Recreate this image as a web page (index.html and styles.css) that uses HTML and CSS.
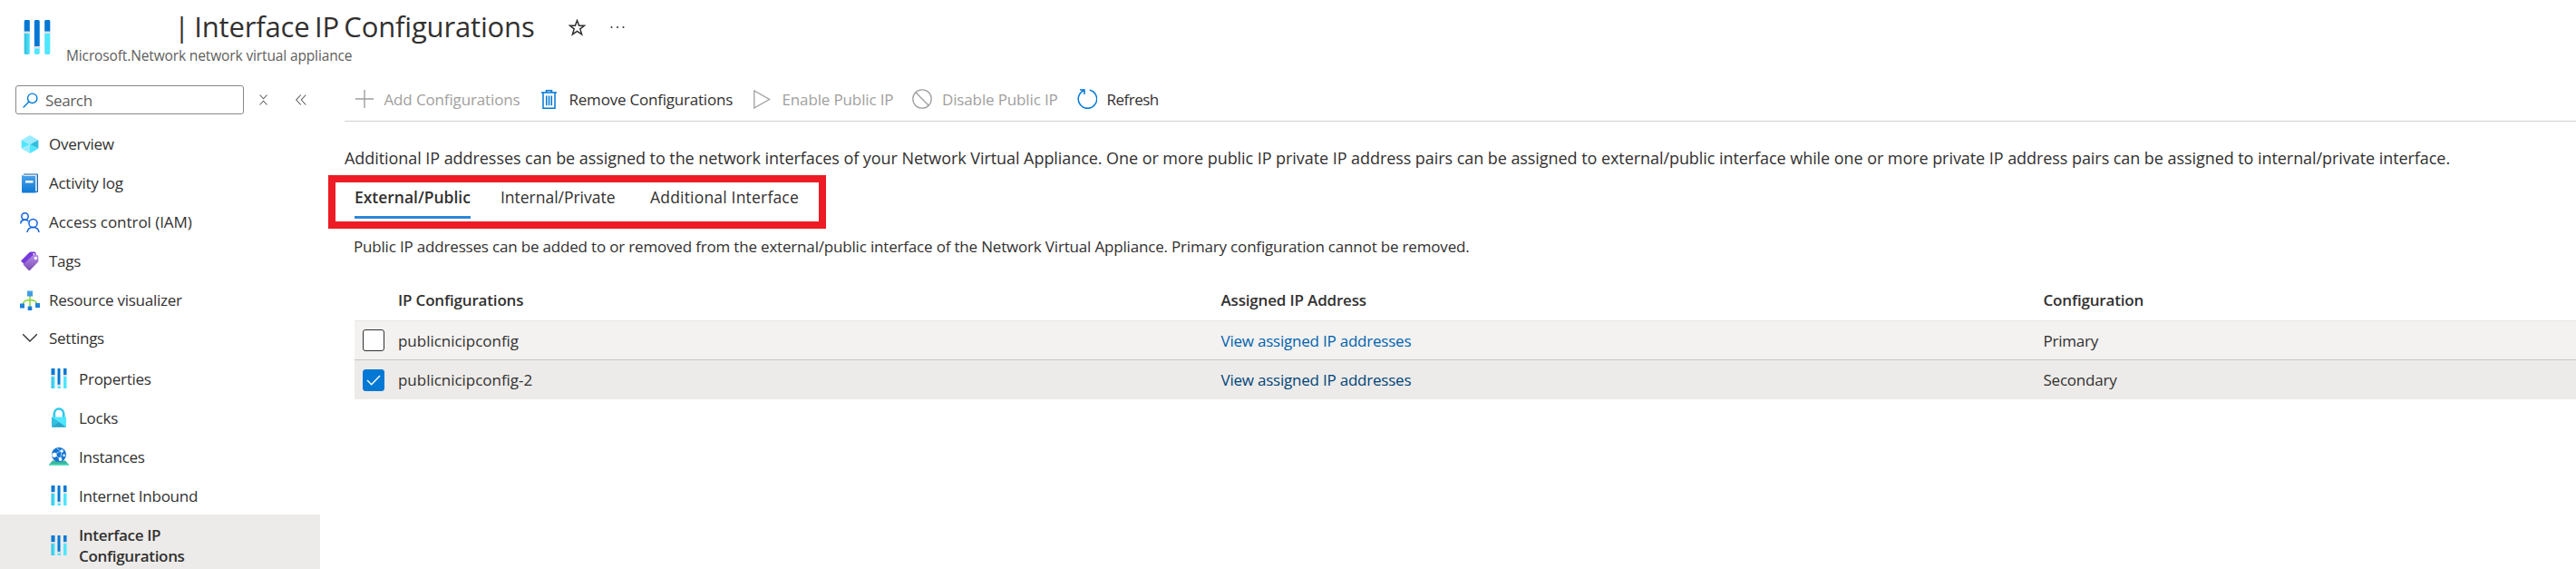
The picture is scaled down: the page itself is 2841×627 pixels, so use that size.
FILE: index.html
```html
<!DOCTYPE html>
<html lang="en">
<head>
<meta charset="utf-8">
<title>Interface IP Configurations</title>
<link rel="stylesheet" href="styles.css">
</head>
<body>
<svg class="defs" width="0" height="0" aria-hidden="true">
  <defs>
    <linearGradient id="cyan" x1="0" y1="0" x2="1" y2="0"><stop offset="0" stop-color="#32bedd"/><stop offset="1" stop-color="#50e6ff"/></linearGradient>
    <linearGradient id="blue" x1="0" y1="0" x2="0" y2="1"><stop offset="0" stop-color="#4ba3ea"/><stop offset="1" stop-color="#0f78d4"/></linearGradient>
    <linearGradient id="violet" x1="0" y1="0" x2="0" y2="1"><stop offset="0" stop-color="#b78be6"/><stop offset="1" stop-color="#7a4fb5"/></linearGradient>
    <symbol id="nva" viewBox="0 0 22 39" preserveAspectRatio="none">
      <path fill="#0078d4" d="M.5 1.500Q.5 0 2 0h2q1 0 1 1.500V13H.5zM8.700 1.500Q8.700 0 10 0h1.500q1.500 0 1.500 1.500V30H8.700zM17 1.500Q17 0 18.300 0h2q1.200 0 1.200 1.500V13H17z"/>
      <path fill="url(#cyan)" d="M.5 15H5v22.500Q5 39 3.800 39H1.700Q.5 39 .5 37.500z"/>
      <path fill="#50e6ff" d="M17 15h4.500v22.500q0 1.500-1.200 1.500h-2Q17 39 17 37.500zM8.700 32H13v5.500q0 1.500-1.300 1.500H10q-1.300 0-1.300-1.500z"/>
      <path fill="#e0e0e0" d="M0 13h5.600v2H0zM8 30h5.600v2H8zM16.400 13H22v2h-5.600z"/>
    </symbol>
    <symbol id="nva-small" viewBox="0 0 17 22">
      <path fill="#0078d4" d="M0 0h4v7H0zM7 0h3v18H7zM13.500 0H17v7h-3.500z"/>
      <path fill="url(#cyan)" d="M0 9h4v13H0z"/>
      <path fill="#50e6ff" d="M13.500 9H17v13h-3.500zM7 19.500h3.500V22H7z"/>
      <path fill="#dadada" d="M0 7h4v1.700H0zM6.500 17.700h4.200v1.500H6.500zM13.500 7H17v1.700h-3.500z"/>
    </symbol>
  </defs>
</svg>

<header class="header">
  <svg class="header-icon"><use href="#nva"/></svg>
  <div class="header-text">
    <div class="title-row">
      <h1 class="title">| Interface IP Configurations</h1>
      <svg class="star" viewBox="0 0 19 19" fill="none" stroke="#323130" stroke-width="1.500"><path d="M9.500 1.500l2.100 5.700h6l-4.800 3.700 1.800 6-5.100-3.600-5.100 3.600 1.800-6-4.800-3.700h6z"/></svg>
      <svg class="more" viewBox="0 0 16 4" fill="#323130"><circle cx="1.500" cy="2" r="1"/><circle cx="8" cy="2" r="1"/><circle cx="14.500" cy="2" r="1"/></svg>
    </div>
    <div class="subtitle">Microsoft.Network network virtual appliance</div>
  </div>
</header>

<div class="body">
  <aside class="sidebar">
    <div class="search-row">
      <div class="search">
        <svg width="17" height="17" viewBox="0 0 17 17" fill="none" stroke="#0078d4" stroke-width="1.400"><circle cx="10.700" cy="6.300" r="5.200"/><path d="M7 10L.6 16.400"/></svg>
        <span>Search</span>
      </div>
      <svg class="expand" width="9" height="12" viewBox="0 0 9 12" fill="none" stroke="#605e5c" stroke-width="1.100"><path d="M.5.5l4 4.300 4-4.300M.5 11.500l4-4.300 4 4.300"/></svg>
      <svg class="collapse" width="12" height="12" viewBox="0 0 12 12" fill="none" stroke="#605e5c" stroke-width="1.100"><path d="M5.800.5L.8 6l5 5.500M11.300.5l-5 5.500 5 5.500"/></svg>
    </div>
    <nav class="menu">
      <div class="item">
        <svg class="icon" viewBox="0 0 22 22"><path fill="#9cebff" d="M11 1l9.300 5.200L11 11.200 1.700 6.200z"/><path fill="#50e6ff" d="M1.700 6.200l9.300 5-9.300 4.600z"/><path fill="#9cebff" d="M11 11.200V21l-9.300-5.200z"/><path fill="#32bedd" d="M20.300 6.200v9.600L11 11.200z"/><path fill="#50e6ff" d="M11 11.200l9.300 4.600L11 21z"/></svg>
        <span>Overview</span>
      </div>
      <div class="item">
        <svg class="icon" viewBox="0 0 22 22"><path fill="#0f6cbd" d="M4 .5h15q1 0 1 1V20q0 1-1 1H4z"/><path fill="#e6e6e6" d="M4 1.500h14.800v18.300H4z"/><path fill="url(#blue)" d="M2 2.600q0-.6.600-.6L5 3h12v18.500H2.800q-.8 0-.8-.8z"/><path fill="#fff" d="M6 8h8.500v2.500H6z"/></svg>
        <span>Activity log</span>
      </div>
      <div class="item wide">
        <svg class="icon" viewBox="0 0 22 22" fill="none" stroke="#0f62d9" stroke-width="1.500"><circle cx="5.500" cy="4.500" r="3.700"/><path d="M.8 12.500q0-4.300 4.700-4.300 2.500 0 3.800 1.800"/><circle cx="14.500" cy="12" r="4.600"/><path d="M8 22q.7-5.400 6.500-5.400T21 22"/></svg>
        <span>Access control (IAM)</span>
      </div>
      <div class="item">
        <svg class="icon" viewBox="0 0 22 22"><path fill="#773adc" d="M1 10.500L10.500 1q.6-.5 1.500-.5h4q1.500 0 1.600 1.500v4.500L6.500 16z"/><path fill="url(#violet)" d="M3.500 14.500L14 4.500q.7-.5 1.500-.5h3.500q1.400 0 1.300 1.500v5q0 .8-.6 1.400L11.200 20.700q-.9.800-1.800 0z"/><circle cx="17.300" cy="7.500" r="1.700" fill="#fff"/><circle cx="15.400" cy="3" r="1" fill="#fff"/></svg>
        <span>Tags</span>
      </div>
      <div class="item">
        <svg class="icon" viewBox="0 0 22 22"><path fill="none" stroke="#86d633" stroke-width="1.500" d="M11 6v12M3 15.500q1-5 8-5t8 5"/><path fill="url(#blue)" d="M8 .5h6v6H8zM0 14.500h5v5H0zM17 14h5v5h-5zM8.700 17.500h4.600V22H8.700z"/></svg>
        <span>Resource visualizer</span>
      </div>
      <div class="item group">
        <svg class="icon" viewBox="0 0 22 22" fill="none" stroke="#323130" stroke-width="1.300"><path d="M3.200 7.200l7.800 7.800 7.800-7.800"/></svg>
        <span>Settings</span>
      </div>
      <div class="item sub"><svg class="icon"><use href="#nva-small"/></svg><span>Properties</span></div>
      <div class="item sub">
        <svg class="icon" viewBox="0 0 22 22"><path fill="none" stroke="#32c8ea" stroke-width="2.700" d="M5.800 12V7a5.200 5.500 0 0 1 10.400 0v5"/><path fill="#50e6ff" d="M3 10.500h16V21q0 .7-.7.7H3.700Q3 21.700 3 21z"/><path fill="#32bedd" d="M3 10.500l8 5.500-8 5.700z"/><path fill="#198ab3" d="M3 21.700L11 16l8 5.700z" opacity=".7"/></svg>
        <span>Locks</span>
      </div>
      <div class="item sub">
        <svg class="icon" viewBox="0 0 22 22"><path fill="#35b79c" d="M4 15.500h14l4 4.500H0z"/><path fill="#5ee0c0" d="M0 19.500h22V21H0z"/><circle cx="11" cy="9" r="8" fill="#1673d0"/><path fill="none" stroke="#9cd0f5" stroke-width="1" d="M6 8.500l8-4M6.500 9l6 5M8.500 1.800l5.500 4-1.500 8"/><circle cx="6" cy="9.300" r="2.600" fill="#fff"/><circle cx="14.300" cy="5" r="1.700" fill="#e6f3fc"/><circle cx="12.500" cy="14" r="1.900" fill="#fff"/><circle cx="16.600" cy="9.800" r="1.500" fill="#c9e6fa"/></svg>
        <span>Instances</span>
      </div>
      <div class="item sub"><svg class="icon"><use href="#nva-small"/></svg><span>Internet Inbound</span></div>
      <div class="item sub selected"><svg class="icon"><use href="#nva-small"/></svg><span>Interface IP<br>Configurations</span></div>
    </nav>
  </aside>

  <main class="main">
    <div class="toolbar">
      <div class="command disabled add">
        <svg width="20" height="20" viewBox="0 0 20 20" fill="none" stroke="#a19f9d" stroke-width="1.400"><path d="M10 0v20M0 10h20"/></svg>
        <span>Add Configurations</span>
      </div>
      <div class="command remove">
        <svg width="17" height="21" viewBox="0 0 17 21" fill="none" stroke="#0078d4" stroke-width="1.500"><path d="M0 3h17M5.500 3V.8h6V3M2 3v17.200h13V3M5.700 6.500v10.700M8.500 6.500v10.700M11.300 6.500v10.700"/></svg>
        <span>Remove Configurations</span>
      </div>
      <div class="command disabled enable">
        <svg width="19" height="21" viewBox="0 0 19 21" fill="none" stroke="#a19f9d" stroke-width="1.300"><path d="M.8 1v19L17.600 10.500z"/></svg>
        <span>Enable Public IP</span>
      </div>
      <div class="command disabled disable">
        <svg width="22" height="22" viewBox="0 0 22 22" fill="none" stroke="#a19f9d" stroke-width="1.300"><circle cx="11" cy="11" r="10.200"/><path d="M3.800 3.800l14.400 14.400"/></svg>
        <span>Disable Public IP</span>
      </div>
      <div class="command refresh">
        <svg width="22" height="22" viewBox="0 0 22 22" fill="none" stroke="#0078d4" stroke-width="1.500"><path d="M13.800 1.200A10.200 10.200 0 1 1 7.500 1.700M3 1h5v5"/></svg>
        <span>Refresh</span>
      </div>
    </div>
    <p class="description">Additional IP addresses can be assigned to the network interfaces of your Network Virtual Appliance. One or more public IP private IP address pairs can be assigned to external/public interface while one or more private IP address pairs can be assigned to internal/private interface.</p>
    <div class="tabs">
      <div class="tab active">External/Public</div>
      <div class="tab">Internal/Private</div>
      <div class="tab last">Additional Interface</div>
    </div>
    <section class="panel">
      <p class="hint">Public IP addresses can be added to or removed from the external/public interface of the Network Virtual Appliance. Primary configuration cannot be removed.</p>
      <div class="row head"><span></span><span>IP Configurations</span><span>Assigned IP Address</span><span>Configuration</span></div>
      <div class="row first">
        <span class="checkbox"></span><span class="name">publicnicipconfig</span><a class="link">View assigned IP addresses</a><span>Primary</span>
      </div>
      <div class="row second">
        <span class="checkbox checked"><svg width="16" height="12" viewBox="0 0 16 12" fill="none" stroke="#fff" stroke-width="1.400"><path d="M1 6l4.700 4.700L15 1"/></svg></span><span class="name">publicnicipconfig-2</span><a class="link">View assigned IP addresses</a><span>Secondary</span>
      </div>
    </section>
  </main>
</div>
</body>
</html>
```

FILE: styles.css
```css
* { box-sizing: border-box; }
body {
  margin: 0;
  height: 627px;
  overflow: hidden;
  background: #fff;
  color: #323130;
  font: 17px/23px "Open Sans", "Noto Sans", sans-serif;
  letter-spacing: -0.2px;
  white-space: nowrap;
}
svg { display: block; flex: none; }
.defs { position: absolute; }

.header { display: flex; height: 86px; padding-left: 26px; }
.header-icon { width: 30px; height: 38px; margin-top: 22px; }
.header-text { padding-left: 17px; }
.title-row { display: flex; padding: 7px 0 0 119px; height: 50px; }
.title { margin: 0; width: 400px; font-size: 31px; line-height: 44px; font-weight: 400; letter-spacing: -0.16px; word-spacing: -2.500px; }
.star { width: 19px; height: 19px; margin: 14px 0 0 35px; }
.more { width: 16px; height: 4px; margin: 21px 0 0 27px; }
.subtitle { font-size: 15.500px; line-height: 22px; color: #605e5c; letter-spacing: -0.13px; }

.body { display: flex; height: 541px; }
.sidebar { width: 353px; flex: none; }
.search-row { display: flex; align-items: center; height: 51px; padding: 0 0 3px 17px; }
.search {
  display: flex; align-items: center; gap: 8px;
  width: 252px; height: 32px; padding-left: 7px;
  border: 1px solid #8a8886; border-radius: 3px;
  color: #605e5c; letter-spacing: -0.35px;
}
.expand { margin-left: 17px; }
.collapse { margin-left: 31px; }

.item { display: flex; align-items: center; height: 43px; padding-left: 22px; gap: 10px; letter-spacing: -0.26px; }
.wide { letter-spacing: -0.05px; }
.icon { width: 22px; height: 22px; }
.group { padding-bottom: 3px; }
.sub { padding-left: 54px; gap: 11px; }
.sub span { padding-top: 2px; }
.selected { height: 68px; background: #edebe9; font-weight: 600; letter-spacing: -0.33px; }
.selected span { padding-top: 0; }

.main { flex: 1; min-width: 0; padding-left: 27px; }
.toolbar { display: flex; height: 48px; padding: 0 0 1px 12px; border-bottom: 1px solid #d2d0ce; }
.command { display: flex; align-items: center; height: 46px; letter-spacing: -0.14px; }
.disabled { color: #a19f9d; }
.add { width: 205px; gap: 11.500px; }
.remove { width: 234px; gap: 13.500px; letter-spacing: -0.21px; }
.enable { width: 175px; gap: 12.500px; }
.disable { width: 182px; gap: 11px; }
.refresh { gap: 10.500px; letter-spacing: -0.5px; }

.description { margin: 28px 0 0 0; font-size: 18px; line-height: 24px; letter-spacing: -0.061px; height: 31px; }
.tabs {
  display: flex; gap: 33px; width: 549px; height: 59px; margin-left: -18px; padding: 4px 0 0 21px;
  border: 8px solid #ed1c24; font-size: 17.500px; line-height: 24px; letter-spacing: -0.02px;
}
.tab { width: 128px; height: 36px; }
.active { font-weight: 600; border-bottom: 3px solid #2b88d8; letter-spacing: -0.02px; }
.last { width: 170px; margin-left: 4px; letter-spacing: 0.19px; }

.panel { padding-left: 11px; }
.hint { margin: 8px 0 0 -1px; line-height: 24px; letter-spacing: -0.18px; }
.row { display: grid; grid-template-columns: 48px 907.500px 907px 1fr; align-items: center; height: 43px; letter-spacing: -0.22px; }
.head { height: 69px; padding-top: 23px; font-weight: 600; letter-spacing: -0.17px; }
.first { height: 44px; background: #f3f2f1; border-top: 1px solid #e8e6e4; border-bottom: 1px solid #c8c6c4; }
.second { background: #edebe9; }
.name { letter-spacing: -0.03px; }
.checkbox { display: flex; align-items: center; justify-content: center; width: 24px; height: 24px; margin-left: 9px; border: 1px solid #323130; border-radius: 3px; background: #fff; }
.checked { background: #0078d4; border-color: #0078d4; }
.link { color: #0062ad; }
.second .link { color: #004578; }
```
